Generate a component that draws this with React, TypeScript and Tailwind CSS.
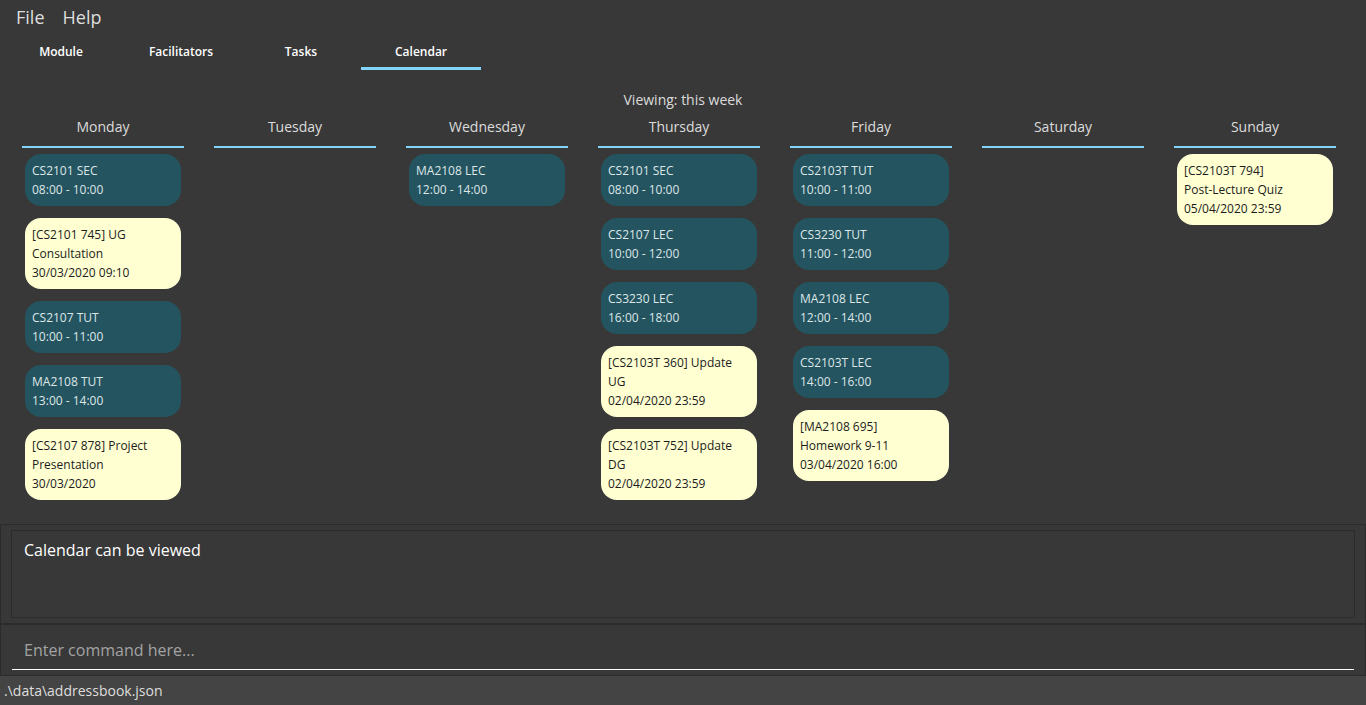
import { useState } from "react";
import clsx from "clsx";

type Entry = { kind: "lesson" | "task"; title: string; time: string };

const lesson = (title: string, time: string): Entry => ({ kind: "lesson", title, time });
const task = (title: string, time: string): Entry => ({ kind: "task", title, time });

const week: { day: string; entries: Entry[] }[] = [
  {
    day: "Monday",
    entries: [
      lesson("CS2101 SEC", "08:00 - 10:00"),
      task("[CS2101 745] UG Consultation", "30/03/2020 09:10"),
      lesson("CS2107 TUT", "10:00 - 11:00"),
      lesson("MA2108 TUT", "13:00 - 14:00"),
      task("[CS2107 878] Project Presentation", "30/03/2020"),
    ],
  },
  { day: "Tuesday", entries: [] },
  { day: "Wednesday", entries: [lesson("MA2108 LEC", "12:00 - 14:00")] },
  {
    day: "Thursday",
    entries: [
      lesson("CS2101 SEC", "08:00 - 10:00"),
      lesson("CS2107 LEC", "10:00 - 12:00"),
      lesson("CS3230 LEC", "16:00 - 18:00"),
      task("[CS2103T 360] Update UG", "02/04/2020 23:59"),
      task("[CS2103T 752] Update DG", "02/04/2020 23:59"),
    ],
  },
  {
    day: "Friday",
    entries: [
      lesson("CS2103T TUT", "10:00 - 11:00"),
      lesson("CS3230 TUT", "11:00 - 12:00"),
      lesson("MA2108 LEC", "12:00 - 14:00"),
      lesson("CS2103T LEC", "14:00 - 16:00"),
      task("[MA2108 695]\nHomework 9-11", "03/04/2020 16:00"),
    ],
  },
  { day: "Saturday", entries: [] },
  { day: "Sunday", entries: [task("[CS2103T 794]\nPost-Lecture Quiz", "05/04/2020 23:59")] },
];

const tabs = ["Module", "Facilitators", "Tasks", "Calendar"];

function EntryCard({ entry }: { entry: Entry }) {
  return (
    <li
      className={clsx(
        "rounded-2xl p-[7px] text-[12px] leading-[19px]",
        entry.kind === "lesson" ? "bg-[#23545f] text-[#dfe6e8]" : "bg-[#ffffd2] text-[#1c1c1c]",
      )}
    >
      <p className="whitespace-pre-line">{entry.title}</p>
      <p>{entry.time}</p>
    </li>
  );
}

function DayColumn({ day, entries }: { day: string; entries: Entry[] }) {
  return (
    <section className="min-w-0">
      <h2 className="border-b-2 border-[#81d4fa] pt-[5px] pb-[9px] text-center text-[14px] leading-5 text-[#dcdcdc]">
        {day}
      </h2>
      <ul className="flex flex-col gap-3 px-[3px] pt-1.5">
        {entries.map((entry, i) => (
          <EntryCard key={i} entry={entry} />
        ))}
      </ul>
    </section>
  );
}

export default function App() {
  const [active, setActive] = useState("Calendar");
  const [command, setCommand] = useState("");

  return (
    <div className="flex min-h-screen flex-col bg-[#383838] font-['Open_Sans','Noto_Sans',sans-serif]">
      <nav className="flex h-9 items-center gap-[18px] px-4 pb-0.5 text-[18px] text-[#dedede]">
        <button type="button">File</button>
        <button type="button">Help</button>
      </nav>

      <div role="tablist" className="flex px-px">
        {tabs.map((tab) => (
          <button
            key={tab}
            type="button"
            role="tab"
            aria-selected={tab === active}
            onClick={() => setActive(tab)}
            className={clsx(
              "h-[34px] w-[120px] border-b-3 text-[12px] leading-[30px] font-semibold text-white",
              tab === active ? "border-[#81d4fa]" : "border-transparent",
            )}
          >
            {tab}
          </button>
        ))}
      </div>

      <main className="flex-1 pt-5 pb-6">
        <p className="text-center text-[14px] leading-5 text-[#dcdcdc]">Viewing: this week</p>
        <div className="grid grid-cols-7 gap-[30px] pt-0.5 pr-[30px] pl-[22px]">
          {week.map((column) => (
            <DayColumn key={column.day} {...column} />
          ))}
        </div>
      </main>

      <section className="border border-[#2b2b2b] px-2.5 py-[5px]">
        <textarea
          readOnly
          aria-label="Result"
          value="Calendar can be viewed"
          className="block h-[88px] w-full resize-none border border-[#2b2b2b] px-3 py-[7px] text-[16px] leading-6 text-white outline-none"
        />
      </section>

      <form
        className="border border-[#2b2b2b] px-[11px] pt-1 pb-[5px]"
        onSubmit={(event) => {
          event.preventDefault();
          setCommand("");
        }}
      >
        <input
          type="text"
          aria-label="Command"
          placeholder="Enter command here..."
          value={command}
          onChange={(event) => setCommand(event.target.value)}
          className="block h-[41px] w-full border-b border-white px-3 pt-0.5 text-[16px] leading-6 text-white outline-none placeholder:text-[#a3a3a3]"
        />
      </form>

      <footer className="bg-[#444444] px-1 py-1 text-[14px] leading-[21px] text-[#dedede]">
        .\data\addressbook.json
      </footer>
    </div>
  );
}
